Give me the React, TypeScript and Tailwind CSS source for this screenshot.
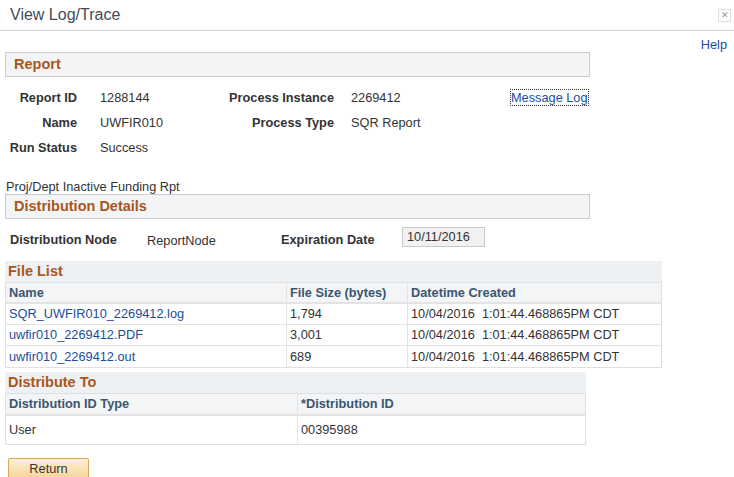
import React from "react";

const orange = "text-[#a9561d]";
const hdr = "text-[#3b5670] font-bold";
const link = "text-[#1a4d9c]";

function Row({ l1, v1, l2, v2, extra }: { l1: string; v1: string; l2?: string; v2?: string; extra?: React.ReactNode }) {
  return (
    <div className="flex items-center h-[25px]">
      <div className="w-[77px] text-right font-bold">{l1}</div>
      <div className="w-[100px] pl-[23px]">{v1}</div>
      <div className="w-[157px] text-right font-bold">{l2}</div>
      <div className="w-[177px] pl-[17px]">{v2}</div>
      {extra}
    </div>
  );
}

export default function App() {
  const files = [
    ["SQR_UWFIR010_2269412.log", "1,794"],
    ["uwfir010_2269412.PDF", "3,001"],
    ["uwfir010_2269412.out", "689"],
  ];
  return (
    <div className="w-[734px] h-[477px] bg-white text-[#333] text-[12.75px] relative overflow-hidden" style={{ fontFamily: '"Liberation Sans", Arial, sans-serif' }}>
      <div className="h-[31px] border-b border-[#cfd3d6] flex items-center justify-between pl-[10px] pr-[3px] text-[16px] text-[#3f4b57]">
        View Log/Trace
        <div className="w-[13px] h-[13px] border border-[#ddd] flex items-center justify-center text-[9px] text-[#999] leading-none">✕</div>
      </div>
      <div className="flex justify-end pr-[7px] pt-[4px] h-[21px]"><span className={link}>Help</span></div>
      <div className="ml-[5px] w-[585px] h-[25px] bg-[#f2f4f5] border border-[#c9cdd0] flex items-center pl-[8px]">
        <span className={`${orange} font-bold text-[14.5px]`}>Report</span>
      </div>
      <div className="pt-[8px] flex flex-col">
        <Row l1="Report ID" v1="1288144" l2="Process Instance" v2="2269412" extra={<span className={`${link} outline-1 outline-dotted outline-[#333] leading-[15px]`}>Message Log</span>} />
        <Row l1="Name" v1="UWFIR010" l2="Process Type" v2="SQR Report" />
        <Row l1="Run Status" v1="Success" />
      </div>
      <div className="pl-[6px] mt-[20px] h-[13px] leading-[13px]">Proj/Dept Inactive Funding Rpt</div>
      <div className="ml-[5px] w-[585px] h-[25px] bg-[#f2f4f5] border border-[#c9cdd0] flex items-center pl-[8px] mt-[1px]">
        <span className={`${orange} font-bold text-[14.5px]`}>Distribution Details</span>
      </div>
      <div className="flex items-center h-[41px] pl-[10px]">
        <div className="w-[137px] font-bold">Distribution Node</div>
        <div className="w-[134px] pt-[3px]">ReportNode</div>
        <div className="w-[121px] font-bold">Expiration Date</div>
        <div className="w-[83px] h-[20px] bg-[#f1f1f1] border border-[#c9c9c9] pl-[4px] leading-[17px] -mt-[6px]">10/11/2016</div>
      </div>
      <div className="ml-[5px] w-[657px] mt-[1px]">
        <div className="h-[21px] bg-[#eef1f3] flex items-center pl-[3px]"><span className={`${orange} font-bold text-[14.5px]`}>File List</span></div>
        <div className="grid grid-cols-[281px_121px_1fr] border border-[#e0e0e0]">
          <div className={`${hdr} h-[21px] flex items-center pl-[3px] bg-[#f4f5f6] border-b-2 border-[#e3e3e3] border-r border-r-[#e3e3e3]`}>Name</div>
          <div className={`${hdr} h-[21px] flex items-center pl-[3px] bg-[#f4f5f6] border-b-2 border-[#e3e3e3] border-r border-r-[#e3e3e3]`}>File Size (bytes)</div>
          <div className={`${hdr} h-[21px] flex items-center pl-[3px] bg-[#f4f5f6] border-b-2 border-[#e3e3e3]`}>Datetime Created</div>
          {files.map(([n, s], i) => (
            <React.Fragment key={i}>
              <div className={`${link} h-[21px] flex items-center pl-[3px] border-r border-[#e3e3e3] ${i < 2 ? "border-b" : ""}`}>{n}</div>
              <div className={`h-[21px] flex items-center pl-[3px] border-r border-[#e3e3e3] ${i < 2 ? "border-b" : ""}`}>{s}</div>
              <div className={`h-[21px] flex items-center pl-[3px] border-[#e3e3e3] whitespace-pre ${i < 2 ? "border-b" : ""}`}>10/04/2016  1:01:44.468865PM CDT</div>
            </React.Fragment>
          ))}
        </div>
      </div>
      <div className="ml-[5px] w-[581px] mt-[4px]">
        <div className="h-[21px] bg-[#eef1f3] flex items-center pl-[3px]"><span className={`${orange} font-bold text-[14.5px]`}>Distribute To</span></div>
        <div className="grid grid-cols-[292px_1fr] border border-[#e0e0e0]">
          <div className={`${hdr} h-[22px] flex items-center pl-[3px] bg-[#f4f5f6] border-b-2 border-[#e3e3e3] border-r border-r-[#e3e3e3]`}>Distribution ID Type</div>
          <div className={`${hdr} h-[22px] flex items-center pl-[3px] bg-[#f4f5f6] border-b-2 border-[#e3e3e3]`}>*Distribution ID</div>
          <div className="h-[28px] flex items-center pl-[3px] border-r border-[#e3e3e3]">User</div>
          <div className="h-[28px] flex items-center pl-[3px]">00395988</div>
        </div>
      </div>
      <div className="ml-[8px] mt-[13px] w-[81px] h-[22px] rounded-[2px] border border-[#d8a75e] bg-gradient-to-b from-[#fdf0d6] to-[#f6d393] flex items-center justify-center text-[#333]">Return</div>
    </div>
  );
}
